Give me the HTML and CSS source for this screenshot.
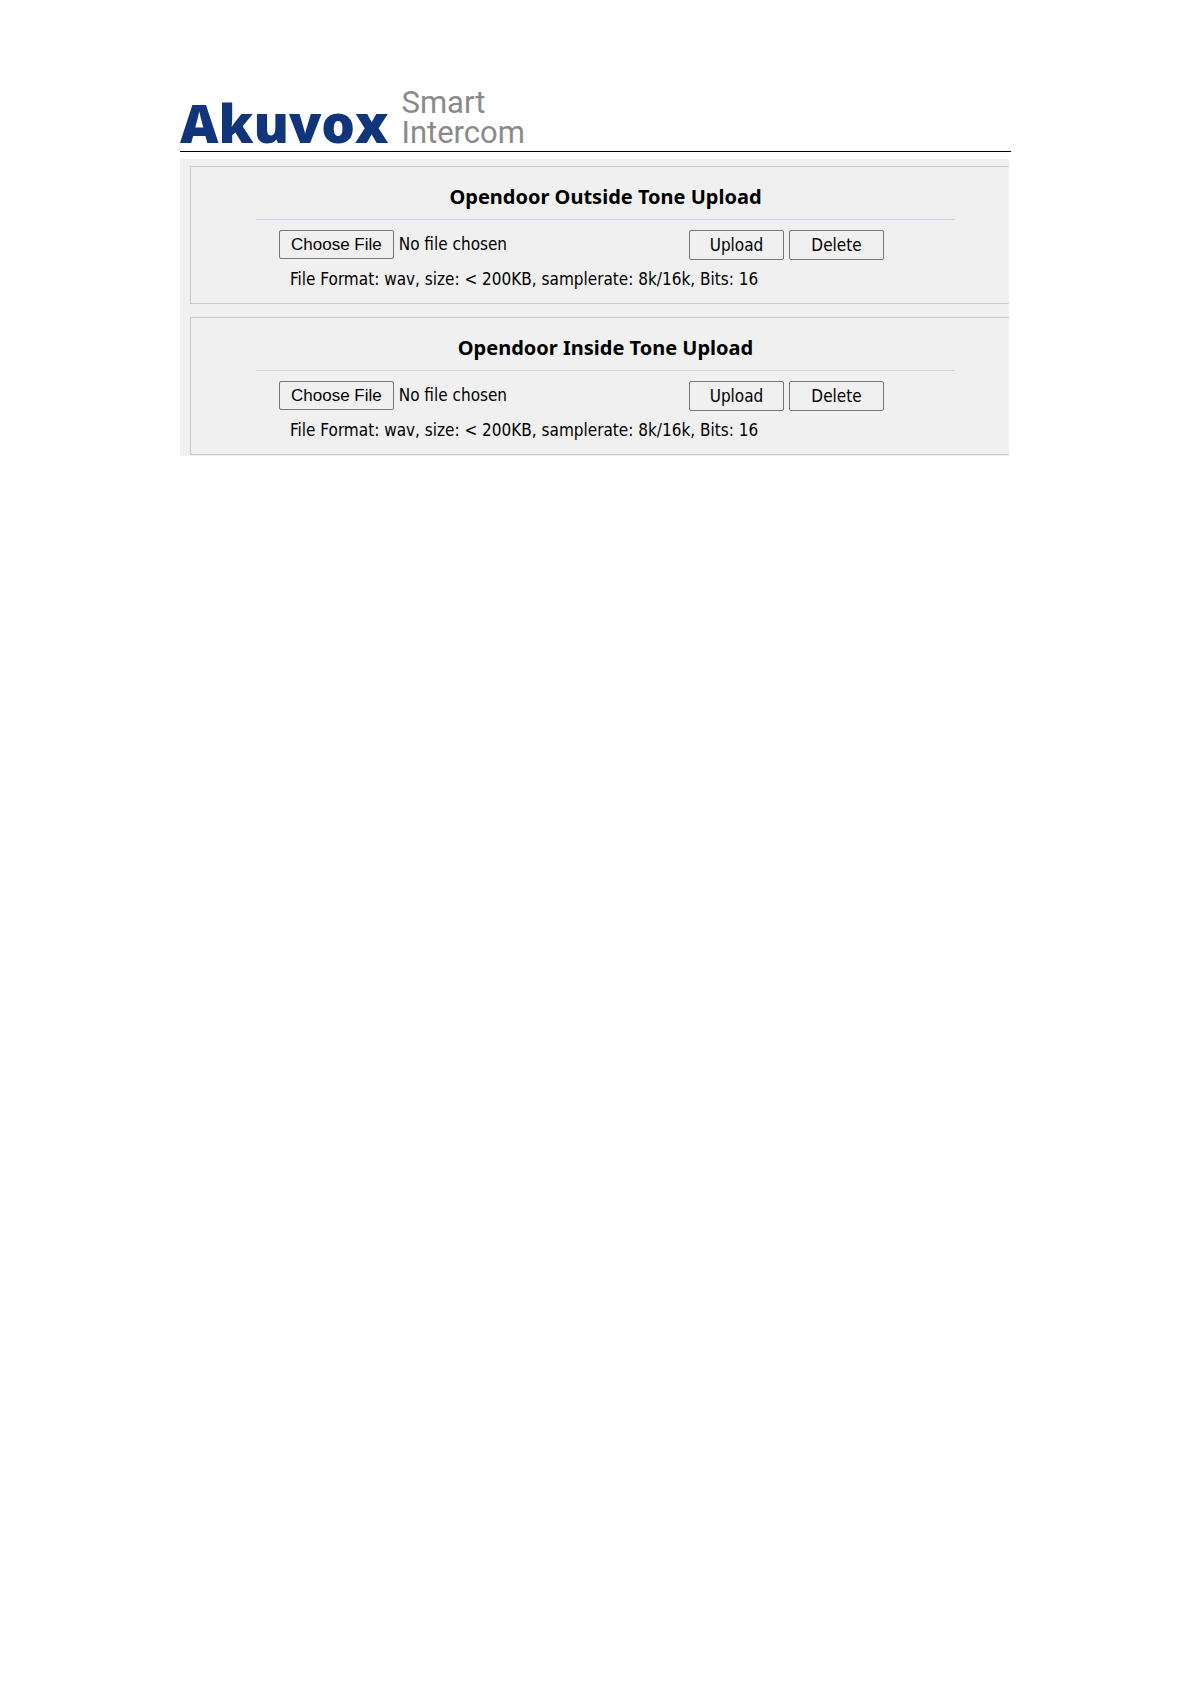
FILE: index.html
```
<!DOCTYPE html>
<html lang="en">
<head>
  <meta charset="UTF-8" />
  <meta name="viewport" content="width=device-width, initial-scale=1.0"/>
  <title>Akuvox Smart Intercom</title>
  <link rel="stylesheet" href="styles.css">
</head>
<body>
  <header class="header">
    <div class="brand">Akuvox</div>
    <div class="tagline">Smart<br>Intercom</div>
  </header>

  <main class="panel">
    <section class="group">
      <form class="upload-form">
        <h2><label for="outsideTone">Opendoor Outside Tone Upload</label></h2>
        <div class="row">
          <input type="file" id="outsideTone" accept=".wav">
          <div class="buttons">
            <button type="button">Upload</button>
            <button type="button">Delete</button>
          </div>
        </div>
        <p class="hint">File Format: wav, size: &lt; 200KB, samplerate: 8k/16k, Bits: 16</p>
      </form>
    </section>

    <section class="group">
      <form class="upload-form">
        <h2><label for="insideTone">Opendoor Inside Tone Upload</label></h2>
        <div class="row">
          <input type="file" id="insideTone" accept=".wav">
          <div class="buttons">
            <button type="button">Upload</button>
            <button type="button">Delete</button>
          </div>
        </div>
        <p class="hint">File Format: wav, size: &lt; 200KB, samplerate: 8k/16k, Bits: 16</p>
      </form>
    </section>
  </main>
</body>
</html>
```
FILE: styles.css
```
* {
  box-sizing: border-box;
}

body {
  margin: 0;
  padding: 84px 180px;
  background: #fff;
  color: #000;
  font-family: "DejaVu Sans Condensed", "Noto Sans", sans-serif;
  font-size: 17px;
}

.header {
  display: flex;
  align-items: flex-end;
  gap: 13px;
  height: 68px;
  border-bottom: 1px solid #000;
}

.brand {
  color: #10357a;
  font-family: "Open Sans", sans-serif;
  font-size: 53px;
  font-weight: 800;
  line-height: 54px;
  padding-bottom: 1px;
}

.tagline {
  color: #8a8a8a;
  font-family: Roboto, sans-serif;
  font-size: 31px;
  font-weight: 400;
  line-height: 30px;
  padding-bottom: 3px;
}

.panel {
  display: flex;
  flex-direction: column;
  gap: 13px;
  margin: 7px 2px 0 0;
  padding: 7px 0 1px 10px;
  background: #f0f0f0;
}

.group {
  padding: 15px 54px 11px 65px;
  border: 1px solid #c8c8c8;
  border-right: none;
}

h2 {
  margin: 0 0 10px;
  padding-bottom: 7px;
  border-bottom: 1px solid #c5d0ea;
  font-family: "Noto Sans", sans-serif;
  font-size: 20px;
  line-height: 30px;
  text-align: center;
}

.row {
  display: flex;
  justify-content: space-between;
  align-items: flex-start;
  padding: 0 71px 0 23px;
}

input[type="file"] {
  width: 260px;
  color: #000;
  font-family: "DejaVu Sans Condensed", "Noto Sans", sans-serif;
  font-size: 17px;
}

input[type="file"]::file-selector-button {
  height: 29px;
  margin: 0 5px 0 0;
  padding: 0 11px;
  border: 1px solid #767676;
  border-radius: 2px;
  background: #f0f0f0;
  color: #000;
  font-family: "Liberation Sans", Arial, sans-serif;
  font-size: 17px;
}

.buttons {
  display: flex;
  gap: 5px;
}

button {
  width: 95px;
  height: 30px;
  padding: 0;
  border: 1px solid #767676;
  border-radius: 2px;
  background: #f0f0f0;
  color: #000;
  font-family: "DejaVu Sans Condensed", "Noto Sans", sans-serif;
  font-size: 17px;
}

.hint {
  margin: 6px 0 0;
  padding-left: 34px;
  line-height: 26px;
}
```
